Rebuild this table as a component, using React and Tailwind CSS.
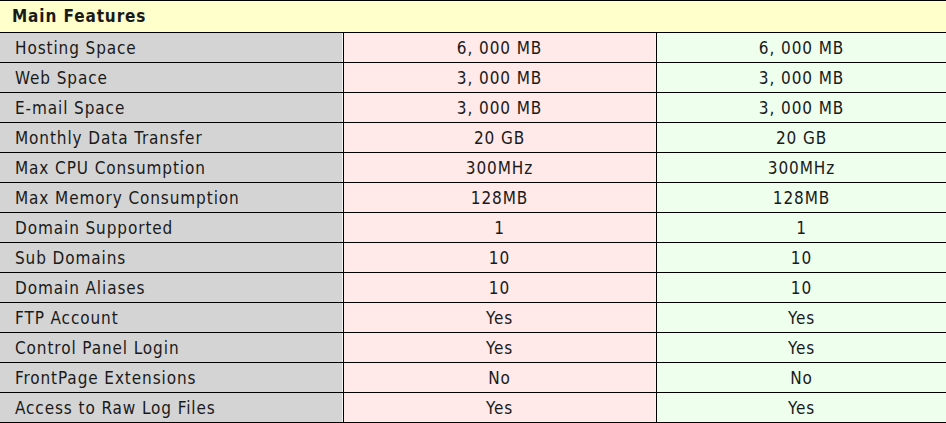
const rows = [
  ['Hosting Space', '6, 000 MB'],
  ['Web Space', '3, 000 MB'],
  ['E-mail Space', '3, 000 MB'],
  ['Monthly Data Transfer', '20 GB'],
  ['Max CPU Consumption', '300MHz'],
  ['Max Memory Consumption', '128MB'],
  ['Domain Supported', '1'],
  ['Sub Domains', '10'],
  ['Domain Aliases', '10'],
  ['FTP Account', 'Yes'],
  ['Control Panel Login', 'Yes'],
  ['FrontPage Extensions', 'No'],
  ['Access to Raw Log Files', 'Yes'],
];

export default function App() {
  return (
    <div
      className="w-[946px] h-[423px] overflow-hidden bg-white text-[#1a1a1a] text-[17px] tracking-[0.9px]"
      style={{ fontFamily: '"DejaVu Sans Condensed", "DejaVu Sans", sans-serif' }}
    >
      <div className="h-[33px] border-t border-b border-black bg-[#ffffcc] pl-[12px] flex items-center font-bold">
        Main Features
      </div>
      {rows.map(([label, value]) => (
        <div key={label} className="grid grid-cols-[343px_313px_1fr] h-[30px] border-b border-black">
          <div className="bg-[#d4d4d4] pl-[15px] pt-[2px] flex items-center border-r border-[#f4f4f4]">
            {label}
          </div>
          <div className="bg-[#ffe9e9] pt-[2px] flex items-center justify-center border-l border-black border-r border-r-[#f6f6f6]">
            {value}
          </div>
          <div className="bg-[#eeffee] pt-[2px] flex items-center justify-center border-l border-black">
            {value}
          </div>
        </div>
      ))}
    </div>
  );
}
